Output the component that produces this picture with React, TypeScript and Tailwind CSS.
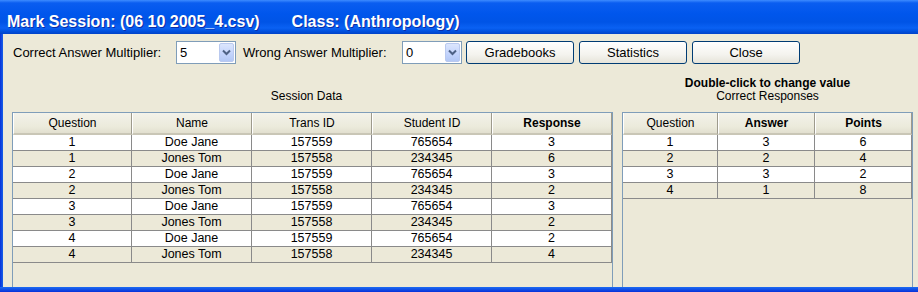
import React from "react";

const sessionRows = [
  ["1", "Doe Jane", "157559", "765654", "3"],
  ["1", "Jones Tom", "157558", "234345", "6"],
  ["2", "Doe Jane", "157559", "765654", "3"],
  ["2", "Jones Tom", "157558", "234345", "2"],
  ["3", "Doe Jane", "157559", "765654", "3"],
  ["3", "Jones Tom", "157558", "234345", "2"],
  ["4", "Doe Jane", "157559", "765654", "2"],
  ["4", "Jones Tom", "157558", "234345", "4"],
];

const answerRows = [
  ["1", "3", "6"],
  ["2", "2", "4"],
  ["3", "3", "2"],
  ["4", "1", "8"],
];

function Combo({ value }: { value: string }) {
  return (
    <div className="flex h-[23px] w-[60px] shrink-0 items-stretch border border-[#7F9DB9] bg-white">
      <div className="flex flex-1 items-center pl-[3px] text-[13px] text-black">{value}</div>
      <div className="m-[1px] flex w-[15px] items-center justify-center rounded-[2px] border border-[#B9C9EF] bg-[linear-gradient(180deg,#DCE6FD_0%,#C2D3FC_60%,#B3C8F5_100%)]">
        <svg width="9" height="7" viewBox="0 0 9 7">
          <path d="M1 1.5 L4.5 5 L8 1.5" stroke="#4D6185" strokeWidth="2" fill="none" />
        </svg>
      </div>
    </div>
  );
}

function XpButton({ label }: { label: string }) {
  return (
    <button className="flex h-[23px] w-[108px] items-center justify-center rounded-[3px] border border-[#003C74] bg-[linear-gradient(180deg,#FFFFFF_0%,#F4F3EE_60%,#E6E4DA_100%)] text-[13px] text-black">
      {label}
    </button>
  );
}

function HeaderCell({ label, bold }: { label: string; bold?: boolean }) {
  return (
    <div
      className={
        "flex h-[22px] items-center justify-center border-l border-l-white border-r border-r-[#9D9A8C] border-b-[2px] border-b-[#C9C6B6] bg-[linear-gradient(180deg,#F3F2EA_0%,#EBEADB_70%,#E2DFCF_100%)] text-[12px] text-black " +
        (bold ? "font-bold" : "")
      }
    >
      {label}
    </div>
  );
}

function Table({
  cols,
  headers,
  boldCols,
  rows,
}: {
  cols: string;
  headers: string[];
  boldCols: number[];
  rows: string[][];
}) {
  return (
    <div className="flex flex-col">
      <div className={"grid " + cols}>
        {headers.map((h, i) => (
          <HeaderCell key={h} label={h} bold={boldCols.includes(i)} />
        ))}
      </div>
      {rows.map((r, ri) => (
        <div
          key={ri}
          className={"grid border-b border-b-[#8A8A8A] " + cols + " " + (ri % 2 === 0 ? "bg-white" : "bg-[#ECE9D8]")}
        >
          {r.map((c, ci) => (
            <div
              key={ci}
              className="flex h-[15px] items-center justify-center border-r border-r-[#8A8A8A] text-[12.5px] leading-none text-black"
            >
              {c}
            </div>
          ))}
        </div>
      ))}
    </div>
  );
}

export default function App() {
  return (
    <div className="flex h-[292px] w-[918px] flex-col overflow-hidden bg-[#0841D6] font-['Liberation_Sans',Arial,sans-serif]">
      <div className="flex h-[34px] shrink-0 items-center gap-[32px] bg-[linear-gradient(180deg,#3D8BFF_0px,#0A5DF0_3px,#0056EC_14px,#0054E6_22px,#0A61F3_28px,#0052E0_31px,#0042C8_34px)] pl-[7px] pt-[10px] text-[16px] font-bold text-white [text-shadow:1px_1px_#0B2EA8]">
        <span>Mark Session: (06 10 2005_4.csv)</span>
        <span>Class: (Anthropology)</span>
      </div>

      <div className="flex h-[253px] shrink-0">
        <div className="w-[3px] bg-[linear-gradient(90deg,#0831D9,#1660E8)]" />
        <div className="flex flex-1 flex-col overflow-hidden bg-[#ECE9D8]">
          <div className="flex shrink-0 items-center pl-[10px] pt-[7px] text-[13px] text-black">
            <span className="w-[163px]">Correct Answer Multiplier:</span>
            <Combo value="5" />
            <span className="ml-[7px] w-[159px]">Wrong Answer Multiplier:</span>
            <Combo value="0" />
            <div className="ml-[4px] flex gap-[5px]">
              <XpButton label="Gradebooks" />
              <XpButton label="Statistics" />
              <XpButton label="Close" />
            </div>
          </div>

          <div className="flex h-[48px] shrink-0 items-end pb-[9px] text-[12px] text-black">
            <div className="ml-[9px] w-[601px] pr-[12px] text-center leading-[13px]">Session Data</div>
            <div className="ml-[9px] flex w-[291px] flex-col items-center leading-[13px]">
              <span className="font-bold">Double-click to change value</span>
              <span>Correct Responses</span>
            </div>
          </div>

          <div className="flex h-[175px] shrink-0">
            <div className="ml-[9px] h-[180px] w-[601px] shrink-0 border border-[#7F9DB9]">
              <Table
                cols="grid-cols-[119px_120px_120px_120px_120px]"
                headers={["Question", "Name", "Trans ID", "Student ID", "Response"]}
                boldCols={[4]}
                rows={sessionRows}
              />
            </div>
            <div className="ml-[9px] h-[180px] w-[291px] shrink-0 border border-[#7F9DB9]">
              <Table
                cols="grid-cols-[95px_97px_97px]"
                headers={["Question", "Answer", "Points"]}
                boldCols={[1, 2]}
                rows={answerRows}
              />
            </div>
          </div>
        </div>
      </div>
      <div className="h-[5px] shrink-0 bg-[linear-gradient(180deg,#1C6CF2,#0831D9)]" />
    </div>
  );
}
